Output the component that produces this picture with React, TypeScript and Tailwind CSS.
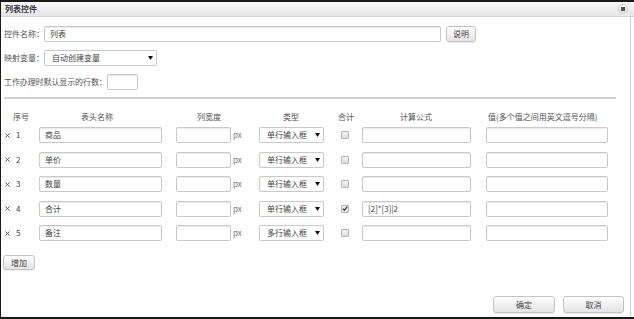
import React from 'react';

const font = { fontFamily: '"Noto Sans CJK SC", "Noto Sans", sans-serif' };

interface RowData {
  no: number;
  name: string;
  type: string;
  sum: boolean;
  formula: string;
}

const rows: RowData[] = [
  { no: 1, name: '商品', type: '单行输入框', sum: false, formula: '' },
  { no: 2, name: '单价', type: '单行输入框', sum: false, formula: '' },
  { no: 3, name: '数量', type: '单行输入框', sum: false, formula: '' },
  { no: 4, name: '合计', type: '单行输入框', sum: true, formula: '[2]*[3]|2' },
  { no: 5, name: '备注', type: '多行输入框', sum: false, formula: '' },
];

const TextBox: React.FC<{ value?: string; className?: string }> = ({ value = '', className = '' }) => (
  <div
    className={`shrink-0 h-[16px] border border-[#c9c9c9] rounded-[2px] bg-white shadow-[inset_0_1px_1px_rgba(0,0,0,0.08)] flex items-center px-[5px] text-[8px] text-[#444] leading-none whitespace-nowrap ${className}`}
  >
    {value}
  </div>
);

const SelectBox: React.FC<{ value: string; className?: string }> = ({ value, className = '' }) => (
  <div
    className={`shrink-0 h-[16px] border border-[#c9c9c9] rounded-[2px] bg-white flex items-center justify-between pl-[7px] pr-[3px] text-[8px] text-[#444] leading-none whitespace-nowrap ${className}`}
  >
    <span>{value}</span>
    <svg width="5" height="4" viewBox="0 0 5 4">
      <path d="M0 0 L5 0 L2.5 4 Z" fill="#111" />
    </svg>
  </div>
);

const Btn: React.FC<{ label: string; className?: string }> = ({ label, className = '' }) => (
  <div
    className={`shrink-0 border border-[#c4c4c4] rounded-[3px] bg-gradient-to-b from-[#fdfdfd] to-[#e4e4e4] flex items-center justify-center text-[8px] text-[#444] leading-none shadow-[0_1px_1px_rgba(0,0,0,0.08)] ${className}`}
  >
    {label}
  </div>
);

const CheckBox: React.FC<{ checked: boolean }> = ({ checked }) => (
  <div className="ml-[17px] w-[8px] h-[8px] border border-[#b5b5b5] rounded-[1px] bg-gradient-to-b from-[#f4f4f4] to-[#dcdcdc] flex items-center justify-center">
    {checked && (
      <svg width="7" height="7" viewBox="0 0 8 8">
        <path d="M1.2 4.2 L3.2 6.2 L7 1.4" fill="none" stroke="#333" strokeWidth="1.6" />
      </svg>
    )}
  </div>
);

const gridCols = 'grid grid-cols-[35px_123px_14px_55px_28px_65px_38px_109px_15px_122px] items-center';

export default function App() {
  return (
    <div
      className="w-[634px] h-[319px] border-t-2 border-b-2 border-l border-[#1a1a1a] bg-white flex flex-col overflow-hidden"
      style={font}
    >
      {/* title bar */}
      <div className="h-[15px] border-b border-[#d6d6d6] bg-gradient-to-b from-[#f7f7f7] to-[#e6e6e6] flex items-center justify-between pl-[4px] pr-[6px]">
        <span className="text-[8px] font-bold text-[#3a3340] leading-none">列表控件</span>
        <div className="w-[10px] h-[10px] rounded-full border border-[#cfcfcf] bg-gradient-to-b from-[#fbfbfb] to-[#dedede] flex items-center justify-center">
          <div className="w-[4px] h-[4px] bg-[#555]" />
        </div>
      </div>

      {/* body */}
      <div className="flex-1 w-[630px] border-r border-[#cfcfcf] pl-[3px] pt-[9px] flex flex-col text-[8px] text-[#555] leading-none">
        <div className="flex items-center">
          <span className="w-[40px] shrink-0 whitespace-nowrap">控件名称：</span>
          <TextBox value="列表" className="w-[397px]" />
          <Btn label="说明" className="ml-[5px] w-[30px] h-[16px]" />
        </div>

        <div className="flex items-center mt-[8px]">
          <span className="w-[40px] shrink-0 whitespace-nowrap">映射变量：</span>
          <SelectBox value="自动创建变量" className="w-[113px]" />
        </div>

        <div className="flex items-center mt-[8px]">
          <span className="w-[103px] shrink-0 whitespace-nowrap tracking-[-0.1px]">工作办理时默认显示的行数：</span>
          <TextBox className="w-[31px]" />
        </div>

        <div className="mt-[7px] w-[612px] h-[2px] bg-[#d2d2d2]" />

        {/* table header */}
        <div className={`${gridCols} mt-[11px] h-[13px] text-[#555]`}>
          <span className="pl-[9px]">序号</span>
          <span className="pl-[42px]">表头名称</span>
          <span />
          <span className="pl-[21px] whitespace-nowrap">列宽度</span>
          <span />
          <span className="pl-[24px]">类型</span>
          <span className="pl-[14px]">合计</span>
          <span className="pl-[38px]">计算公式</span>
          <span />
          <span className="pl-[2px] whitespace-nowrap">值(多个值之间用英文逗号分隔)</span>
        </div>

        {rows.map((r) => (
          <div key={r.no} className={`${gridCols} h-[24.5px]`}>
            <div className="flex items-center text-[#444]">
              <svg width="5" height="5" viewBox="0 0 5 5" className="ml-[1px] mr-[6px]">
                <path d="M0.5 0.5 L4.5 4.5 M4.5 0.5 L0.5 4.5" stroke="#555" strokeWidth="1" />
              </svg>
              <span className="text-[8px]">{r.no}</span>
            </div>
            <TextBox value={r.name} />
            <span />
            <TextBox />
            <span className="pl-[2px] text-[#777]">px</span>
            <SelectBox value={r.type} />
            <CheckBox checked={r.sum} />
            <TextBox value={r.formula} />
            <span />
            <TextBox />
          </div>
        ))}

        <Btn label="增加" className="mt-[9.5px] -ml-[1px] w-[32px] h-[15px]" />

        <div className="mt-[26px] flex justify-end gap-[8px] pr-[6px]">
          <Btn label="确定" className="w-[62px] h-[17px]" />
          <Btn label="取消" className="w-[61px] h-[17px]" />
        </div>
      </div>
    </div>
  );
}
